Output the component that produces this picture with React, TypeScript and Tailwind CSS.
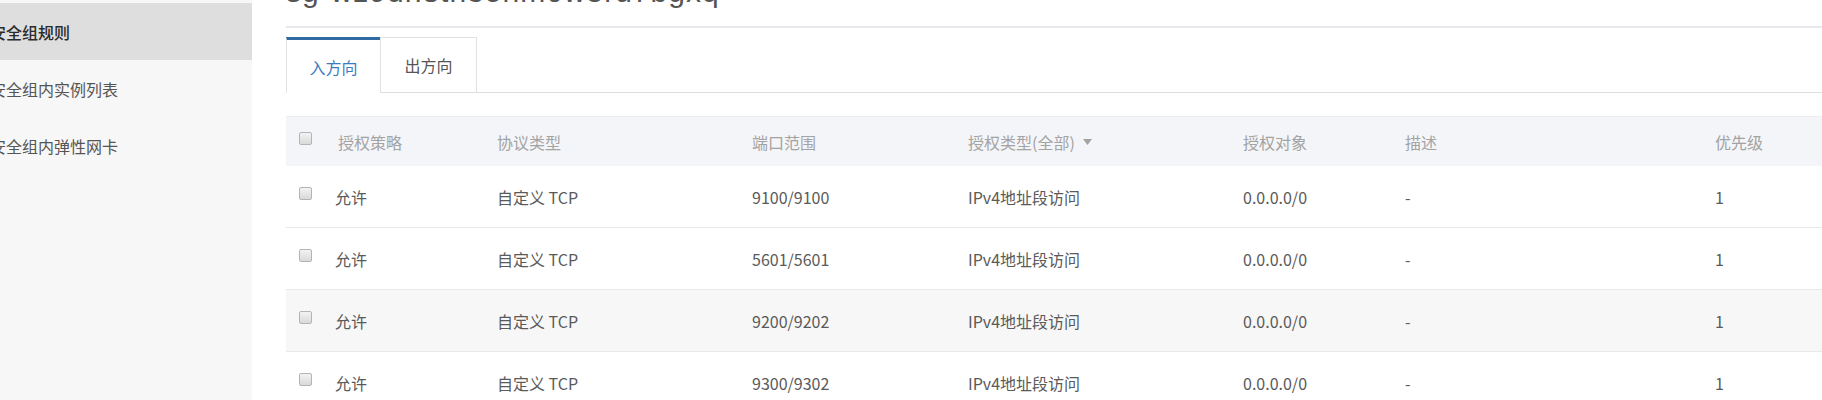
import React from 'react';

const rows = [
  { policy: '允许', proto: '自定义 TCP', port: '9100/9100', type: 'IPv4地址段访问', target: '0.0.0.0/0', desc: '-', prio: '1' },
  { policy: '允许', proto: '自定义 TCP', port: '5601/5601', type: 'IPv4地址段访问', target: '0.0.0.0/0', desc: '-', prio: '1' },
  { policy: '允许', proto: '自定义 TCP', port: '9200/9202', type: 'IPv4地址段访问', target: '0.0.0.0/0', desc: '-', prio: '1', hover: true },
  { policy: '允许', proto: '自定义 TCP', port: '9300/9302', type: 'IPv4地址段访问', target: '0.0.0.0/0', desc: '-', prio: '1' },
];

const menu = ['安全组规则', '安全组内实例列表', '安全组内弹性网卡'];

const cols = 'grid grid-cols-[52px_159px_255px_216px_275px_162px_310px_1fr] items-center';

function Checkbox() {
  return (
    <div className="w-[13px] h-[13px] rounded-[2px] border border-[#b4b4b4] bg-gradient-to-b from-[#f3f3f3] to-[#d9d9d9] -translate-y-[3px]" />
  );
}

export default function App() {
  return (
    <div className="flex w-[1822px] h-[400px] overflow-hidden bg-white text-[16px]" style={{ fontFamily: '"Noto Sans CJK SC", "Noto Sans", sans-serif' }}>
      {/* Sidebar */}
      <aside className="w-[252px] shrink-0 bg-[#f7f7f7] pt-[3px]">
        {menu.map((m, i) => (
          <div
            key={m}
            className={`h-[57px] flex items-center -ml-[10px] ${i === 0 ? 'bg-[#dedede] text-[#2b2b2b] font-medium' : 'text-[#555]'}`}
          >
            <span>{m}</span>
          </div>
        ))}
      </aside>

      {/* Main */}
      <main className="flex-1 pl-[34px] min-w-0">
        <div className="h-[28px] border-b-2 border-[#e6e8eb] overflow-hidden">
          <div
            className="text-[30px] leading-none text-[#555] -mt-[23px] tracking-[1px] whitespace-nowrap"
            style={{ fontFamily: '"Liberation Sans", Arial, sans-serif' }}
          >
            sg-wz9dh8tn3ohm0w5ru7bgxq
          </div>
        </div>

        {/* Tabs */}
        <div className="mt-[9px] flex h-[56px] border-b border-[#dedede]">
          <div className="w-[94px] h-[56px] border-t-[3px] border-t-[#2f6aa3] border-l border-l-[#e2e2e2] bg-white flex items-center justify-center text-[#3b7bbf] -mb-px">
            入方向
          </div>
          <div className="w-[97px] h-[55px] border border-b-0 border-[#e2e2e2] flex items-center justify-center text-[#555]">
            出方向
          </div>
        </div>

        {/* Table */}
        <div className="mt-[23px]">
          <div className={`${cols} h-[50px] bg-[#f4f5f8] border-t border-[#ebedf0] text-[#a3a3a3]`}>
            <div className="pl-[13px]"><Checkbox /></div>
            <div>授权策略</div>
            <div>协议类型</div>
            <div>端口范围</div>
            <div className="flex items-center gap-[8px]">
              授权类型(全部)
              <svg width="9" height="6" viewBox="0 0 9 6"><path d="M0 0h9L4.5 6z" fill="#a3a3a3" /></svg>
            </div>
            <div>授权对象</div>
            <div>描述</div>
            <div>优先级</div>
          </div>
          {rows.map((r, i) => (
            <div key={i} className={`${cols} h-[62px] border-b border-[#e8e8e8] text-[#5a5a5a] ${r.hover ? 'bg-[#f7f7f7]' : 'bg-white'}`}>
              <div className="pl-[13px]"><Checkbox /></div>
              <div className="-ml-[3px]">{r.policy}</div>
              <div>{r.proto}</div>
              <div>{r.port}</div>
              <div>{r.type}</div>
              <div>{r.target}</div>
              <div>{r.desc}</div>
              <div>{r.prio}</div>
            </div>
          ))}
        </div>
      </main>
    </div>
  );
}
